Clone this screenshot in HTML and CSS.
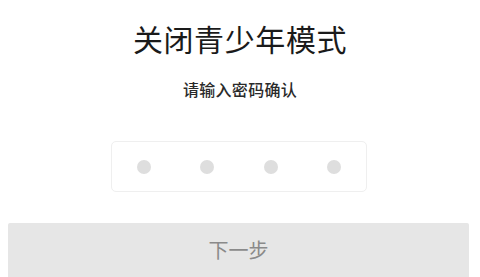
FILE: index.html
```html
<!DOCTYPE html>
<html lang="zh">
<head>
<meta charset="utf-8">
<link rel="stylesheet" href="styles.css">
</head>
<body>
<main class="page">
  <h1 class="title">关闭青少年模式</h1>
  <p class="subtitle">请输入密码确认</p>
  <div class="pin">
    <span class="cell"><i class="dot"></i></span>
    <span class="cell"><i class="dot"></i></span>
    <span class="cell"><i class="dot"></i></span>
    <span class="cell"><i class="dot"></i></span>
  </div>
  <button class="next" type="button">下一步</button>
</main>
</body>
</html>
```
FILE: styles.css
```css
html, body {
  margin: 0;
  padding: 0;
  background: #ffffff;
  overflow: hidden;
}
.page {
  width: 480px;
  height: 277px;
  overflow: hidden;
  display: flex;
  flex-direction: column;
  align-items: center;
  font-family: "Noto Sans CJK SC", "Noto Sans", sans-serif;
}
.page > * {
  flex-shrink: 0;
}
.title {
  margin: 23px 0 0;
  font-size: 30px;
  line-height: 30px;
  font-weight: 400;
  letter-spacing: 0.6px;
  color: #1a1a1a;
}
.subtitle {
  margin: 28px 0 0;
  font-size: 16px;
  line-height: 16px;
  font-weight: 500;
  letter-spacing: 0.3px;
  color: #2a2a2a;
}
.pin {
  margin-top: 44px;
  width: 256px;
  height: 51px;
  box-sizing: border-box;
  border: 1px solid #efefef;
  border-radius: 5px;
  display: grid;
  grid-template-columns: repeat(4, 1fr);
  align-items: center;
  justify-items: center;
  margin-left: -2px;
}
.dot {
  display: block;
  width: 14px;
  height: 14px;
  border-radius: 50%;
  background: #dedede;
}
.next {
  margin-top: 31px;
  align-self: flex-start;
  margin-left: 8px;
  width: 461px;
  height: 56px;
  border: none;
  border-radius: 2px;
  background: #e6e6e6;
  color: #8a8a8a;
  font-family: "Noto Sans CJK SC", "Noto Sans", sans-serif;
  font-size: 20px;
  padding: 0 0 4px;
  letter-spacing: 0;
}
```
